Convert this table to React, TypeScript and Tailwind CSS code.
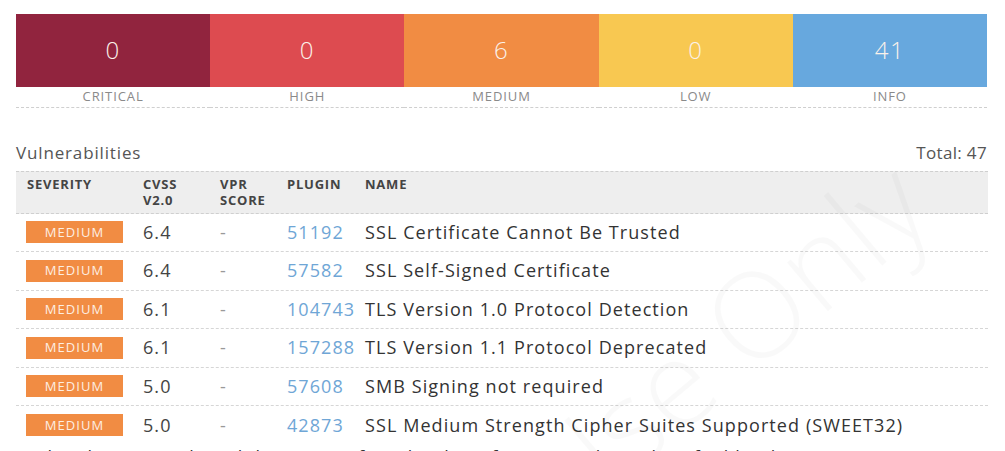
const bars = [
  { label: "CRITICAL", count: 0, bg: "bg-[#91243e]" },
  { label: "HIGH", count: 0, bg: "bg-[#dd4b50]" },
  { label: "MEDIUM", count: 6, bg: "bg-[#f18c43]" },
  { label: "LOW", count: 0, bg: "bg-[#f8c851]" },
  { label: "INFO", count: 41, bg: "bg-[#67a8de]" },
];

const rows = [
  { cvss: "6.4", plugin: "51192", name: "SSL Certificate Cannot Be Trusted" },
  { cvss: "6.4", plugin: "57582", name: "SSL Self-Signed Certificate" },
  { cvss: "6.1", plugin: "104743", name: "TLS Version 1.0 Protocol Detection" },
  { cvss: "6.1", plugin: "157288", name: "TLS Version 1.1 Protocol Deprecated" },
  { cvss: "5.0", plugin: "57608", name: "SMB Signing not required" },
  { cvss: "5.0", plugin: "42873", name: "SSL Medium Strength Cipher Suites Supported (SWEET32)" },
];

export default function App() {
  return (
    <div className="relative w-[1005px] h-[451px] overflow-hidden bg-white font-['Open_Sans',sans-serif]">
      <div className="relative px-4 pt-[14px]">
        {/* Severity summary */}
        <div className="flex w-[971px]">
          {bars.map((b) => (
            <div key={b.label} className="flex-1">
              <div className={`${b.bg} h-[73px] pb-[2px] flex items-center justify-center text-[24px] font-light text-[#fbf1ea] tracking-[0.06em]`}>
                {b.count}
              </div>
              <div className="h-[21px] flex items-center justify-center text-[13px] tracking-[0.07em] text-[#8a8a8a] border-b border-dashed border-[#cfcfcf]">
                {b.label}
              </div>
            </div>
          ))}
        </div>

        {/* Title */}
        <div className="mt-[32px] w-[971px] flex justify-between items-center text-[17px] tracking-[0.05em] text-[#555]">
          <span>Vulnerabilities</span>
          <span className="tracking-[0.02em]">Total: 47</span>
        </div>

        {/* Table */}
        <div className="mt-[5px] w-[972px]">
          <div className="grid grid-cols-[117px_77px_67px_78px_1fr] h-[43px] bg-[#eeeeee] border-y border-dashed border-[#cfcfcf] pt-[4px] text-[13px] font-bold leading-[16px] tracking-[0.06em] text-[#444]">
            <div className="pl-[11px]">SEVERITY</div>
            <div className="pl-[10px]">CVSS<br />V2.0</div>
            <div className="pl-[10px]">VPR<br />SCORE</div>
            <div className="pl-[10px]">PLUGIN</div>
            <div className="pl-[10px]">NAME</div>
          </div>
          {rows.map((r, i) => (
            <div
              key={r.plugin}
              className={`grid grid-cols-[117px_77px_67px_78px_1fr] h-[38.5px] items-center text-[18px] tracking-[0.06em] ${i < rows.length - 1 ? "border-b border-dashed border-[#d6d6d6]" : ""}`}
            >
              <div className="pl-[10px]">
                <div className="w-[97px] h-[22px] bg-[#f18c43] flex items-center justify-center text-[13px] tracking-[0.08em] text-[#fdeee2]">
                  MEDIUM
                </div>
              </div>
              <div className="pl-[10px] text-[#444]">{r.cvss}</div>
              <div className="pl-[10px] text-[#999]">-</div>
              <div className="pl-[10px] text-[#6fa6d6] whitespace-nowrap">{r.plugin}</div>
              <div className="pl-[10px] text-[#333] whitespace-nowrap">{r.name}</div>
            </div>
          ))}
        </div>

        <p className="-mt-[1px] text-[18px] tracking-[0.06em] text-[#333] whitespace-nowrap">
          In the above 41 vulnerabilities were found to be informational, as identified by the scan.
        </p>
      </div>

      {/* Watermark */}
      <div className="pointer-events-none absolute left-[480px] top-[250px] -rotate-[40deg] text-[120px] font-light text-[#000]/[0.025] whitespace-nowrap">
        Use Only
      </div>
    </div>
  );
}
